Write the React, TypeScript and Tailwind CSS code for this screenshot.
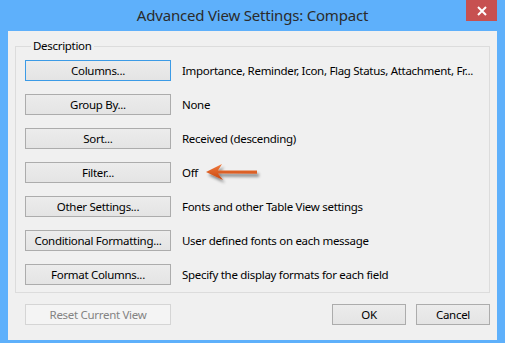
import React from "react";

const rows = [
  { label: "Columns...", value: "Importance, Reminder, Icon, Flag Status, Attachment, Fr...", focus: true },
  { label: "Group By...", value: "None" },
  { label: "Sort...", value: "Received (descending)" },
  { label: "Filter...", value: "Off", arrow: true },
  { label: "Other Settings...", value: "Fonts and other Table View settings" },
  { label: "Conditional Formatting...", value: "User defined fonts on each message" },
  { label: "Format Columns...", value: "Specify the display formats for each field" },
];

function Arrow() {
  return (
    <svg width="60" height="24" viewBox="0 0 60 24" className="ml-[6px]">
      <defs>
        <filter id="sh" x="-20%" y="-50%" width="150%" height="220%">
          <feGaussianBlur in="SourceAlpha" stdDeviation="1.6" />
          <feOffset dx="2" dy="3" />
          <feComponentTransfer>
            <feFuncA type="linear" slope="0.45" />
          </feComponentTransfer>
          <feMerge>
            <feMergeNode />
            <feMergeNode in="SourceGraphic" />
          </feMerge>
        </filter>
        <linearGradient id="ag" x1="0" y1="0" x2="0" y2="1">
          <stop offset="0" stopColor="#f07a3e" />
          <stop offset="1" stopColor="#c9470f" />
        </linearGradient>
      </defs>
      <g filter="url(#sh)">
        <path
          d="M2 11 L18 3 L14 9.6 L53 9.4 L53 12.8 L14 12.6 L19 19 Z"
          fill="url(#ag)"
        />
      </g>
    </svg>
  );
}

function Btn({
  children,
  className = "",
  focus = false,
  disabled = false,
}: {
  children: React.ReactNode;
  className?: string;
  focus?: boolean;
  disabled?: boolean;
}) {
  return (
    <div
      className={
        "flex h-[21px] items-center justify-center whitespace-nowrap border text-[11.5px] tracking-[-0.3px] " +
        (disabled
          ? "border-[#d5d5d5] bg-[#f4f4f4] text-[#838383] "
          : focus
            ? "border-[#3c9be6] bg-gradient-to-b from-[#ececec] to-[#e4e4e4] text-black "
            : "border-[#acacac] bg-gradient-to-b from-[#ececec] to-[#e4e4e4] text-black ") +
        className
      }
    >
      {children}
    </div>
  );
}

export default function App() {
  return (
    <div
      className="flex h-[343px] w-[505px] flex-col bg-[#5eb0fb]"
      style={{ fontFamily: '"Noto Sans", "Open Sans", sans-serif' }}
    >
      <div className="grid h-[31px] grid-cols-[1fr_auto_1fr]">
        <div />
        <div className="pt-[4px] text-[15px] tracking-[-0.2px] text-[#2b2b2b]">
          Advanced View Settings: Compact
        </div>
        <div className="flex justify-end pr-[8px]">
          <div className="flex h-[21px] w-[31px] items-center justify-center bg-[#c75050]">
            <svg width="10" height="10" viewBox="0 0 10 10">
              <path d="M1 1 L9 9 M9 1 L1 9" stroke="#fff" strokeWidth="2" />
            </svg>
          </div>
        </div>
      </div>
      <div className="mx-[8px] mb-[3px] flex flex-1 flex-col bg-[#f0f0f0] px-[7px] pt-[7px]">
        <fieldset className="border border-[#dcdcdc] px-[9px] pb-[7px]">
          <legend className="ml-[6px] px-[2px] text-[11.5px] leading-[16px] tracking-[-0.3px] text-black">
            Description
          </legend>
          <div className="mt-[6px] flex flex-col gap-[13px]">
            {rows.map((r) => (
              <div key={r.label} className="flex h-[21px] items-center">
                <Btn focus={r.focus} className="w-[146px] shrink-0">
                  {r.label}
                </Btn>
                <div className="ml-[11px] whitespace-nowrap text-[11.5px] tracking-[-0.3px] text-black">
                  {r.value}
                </div>
                {r.arrow ? <Arrow /> : null}
              </div>
            ))}
          </div>
        </fieldset>
        <div className="mt-[11px] flex items-center pl-[10px]">
          <Btn disabled className="w-[146px]">
            Reset Current View
          </Btn>
          <div className="flex-1" />
          <Btn className="w-[74px]">OK</Btn>
          <Btn className="ml-[10px] w-[74px]">Cancel</Btn>
        </div>
      </div>
    </div>
  );
}
